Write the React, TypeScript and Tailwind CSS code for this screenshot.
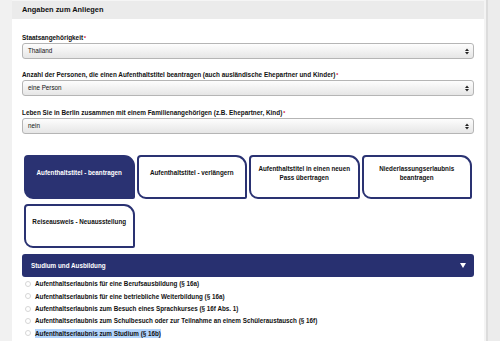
import React from "react";

const font = { fontFamily: '"Liberation Sans", Arial, sans-serif' };

function SelectBox({ value }: { value: string }) {
  return (
    <div className="h-[16px] rounded-[3px] border border-[#b5b5b5] bg-gradient-to-b from-[#fdfdfd] to-[#e6e6e6] flex items-center justify-between pl-[5px] pr-[4px] text-[6.3px] text-[#111]">
      <span>{value}</span>
      <svg width="4" height="7" viewBox="0 0 4 7">
        <path d="M0 3 L2 0.5 L4 3 Z" fill="#222" />
        <path d="M0 4 L2 6.5 L4 4 Z" fill="#222" />
      </svg>
    </div>
  );
}

function Label({ text }: { text: string }) {
  return (
    <div className="text-[6.4px] font-bold leading-[8px] text-[#111] mb-[1px]">
      {text}
      <span className="text-[#d0021b] align-top text-[5px] ml-[1px]">*</span>
    </div>
  );
}

function Tile({ text, active }: { text: string; active?: boolean }) {
  return (
    <div
      className={
        "h-[44px] border-2 border-[#2a3272] rounded-tl-[4px] rounded-tr-[11px] rounded-bl-[9px] rounded-br-[2px] flex items-center justify-center pb-[9px] px-[6px] text-center text-[6.3px] font-bold leading-[9px] " +
        (active ? "bg-[#2a3272] text-white" : "bg-white text-[#111]")
      }
    >
      <span>{text}</span>
    </div>
  );
}

const radios = [
  "Aufenthaltserlaubnis für eine Berufsausbildung (§ 16a)",
  "Aufenthaltserlaubnis für eine betriebliche Weiterbildung (§ 16a)",
  "Aufenthaltserlaubnis zum Besuch eines Sprachkurses (§ 16f Abs. 1)",
  "Aufenthaltserlaubnis zum Schulbesuch oder zur Teilnahme an einem Schüleraustausch (§ 16f)",
  "Aufenthaltserlaubnis zum Studium (§ 16b)",
];

export default function App() {
  return (
    <div className="w-[500px] h-[341px] bg-[#efefef] flex overflow-hidden" style={font}>
      <div className="w-[12px] bg-[#f1f1f1]" />
      <div className="w-[472px] bg-white flex flex-col">
        <div className="h-[19px] bg-[#ebebeb] border-t border-[#f5f5f5] flex items-center px-[10px] text-[7.4px] font-bold text-[#111]">
          Angaben zum Anliegen
        </div>
        <div className="px-[10px]">
          <div className="mt-[15px]">
            <Label text="Staatsangehörigkeit" />
            <SelectBox value="Thailand" />
          </div>
          <div className="mt-[12px]">
            <Label text="Anzahl der Personen, die einen Aufenthaltstitel beantragen (auch ausländische Ehepartner und Kinder)" />
            <SelectBox value="eine Person" />
          </div>
          <div className="mt-[13px]">
            <Label text="Leben Sie in Berlin zusammen mit einem Familienangehörigen (z.B. Ehepartner, Kind)" />
            <SelectBox value="nein" />
          </div>
          <div className="mt-[21px] px-[2px] grid grid-cols-4 gap-x-[2px] gap-y-[5px]">
            <Tile text="Aufenthaltstitel - beantragen" active />
            <Tile text="Aufenthaltstitel - verlängern" />
            <Tile text="Aufenthaltstitel in einen neuen Pass übertragen" />
            <Tile text="Niederlassungserlaubnis beantragen" />
            <Tile text="Reiseausweis - Neuausstellung" />
          </div>
          <div className="mt-[6px] h-[23px] rounded-[3px] bg-[#283070] flex items-center justify-between pl-[9px] pr-[8px] text-white text-[6.3px] font-bold">
            <span>Studium und Ausbildung</span>
            <svg width="6" height="5" viewBox="0 0 6 5">
              <path d="M0 0 H6 L3 5 Z" fill="white" />
            </svg>
          </div>
          <div className="mt-[1px] flex flex-col">
            {radios.map((r, i) => (
              <div key={i} className="h-[12.3px] flex items-center text-[6.3px] font-bold text-[#111]">
                <span className="w-[6px] h-[6px] rounded-full border border-[#d6d6d6] bg-white ml-[3px] mr-[4px]" />
                <span className={i === 4 ? "bg-[#b3d4fc]" : ""}>{r}</span>
              </div>
            ))}
          </div>
        </div>
      </div>
      <div className="w-[2px] bg-[#f4f4f4]" />
      <div className="w-[2px] bg-[#dcdcdc]" />
      <div className="flex-1 bg-[#ececec]" />
    </div>
  );
}
